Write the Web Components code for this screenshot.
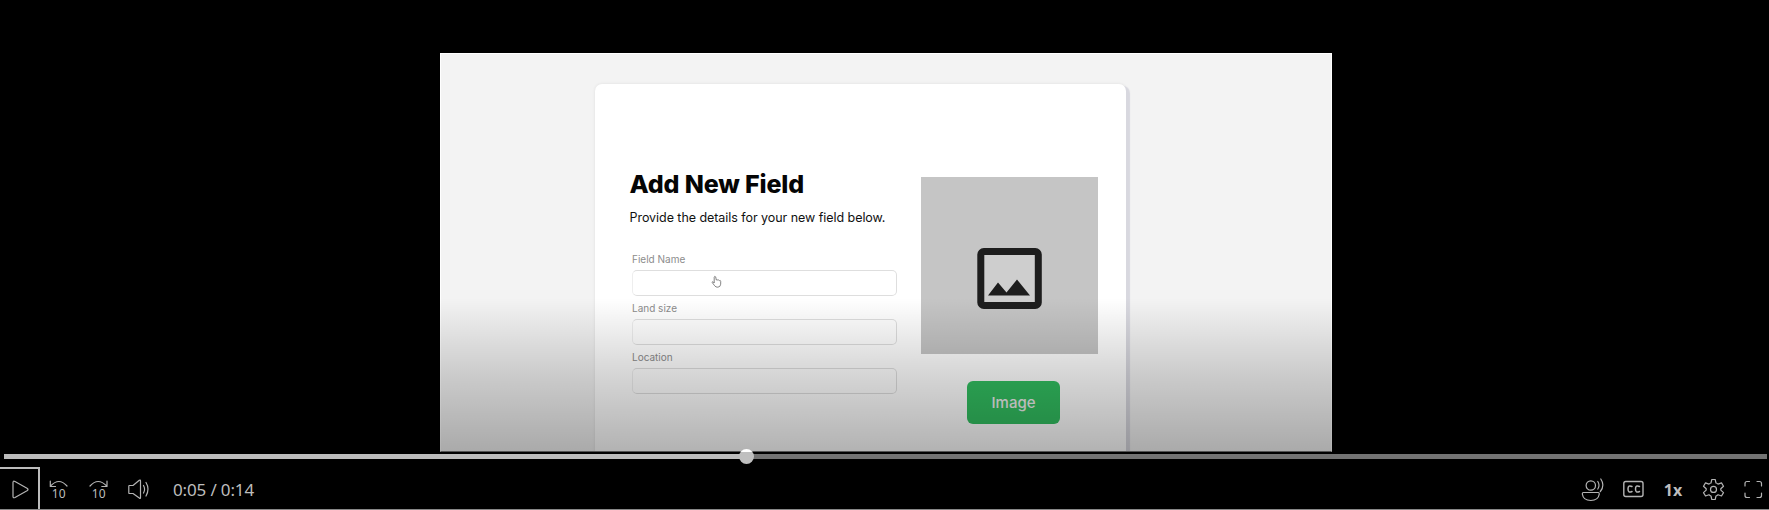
<!DOCTYPE html>
<html lang="en"><head><meta charset="utf-8"><title>Video player</title>
<style>html,body{margin:0;background:#000;height:510px;overflow:hidden}</style></head><body>
<video-player></video-player>
<script>
const define=(name,html)=>customElements.define(name,class extends HTMLElement{
  constructor(){super();const t=document.createElement('template');t.innerHTML=html;this.attachShadow({mode:'open'}).append(t.content.cloneNode(true));}
});
define('form-field',`<style>
:host{display:block;height:49px;font:10px/14px Inter,sans-serif;color:#8c8c8c}
label{display:block;height:18px}
.box{box-sizing:border-box;width:265px;height:26px;border:1px solid #dedede;border-left-color:#eee;border-radius:5px;background:#fff}
</style><label><slot></slot></label><div class="box"></div>`);
define('image-picker',`<style>
:host{display:flex;flex-direction:column;align-items:center;width:177px}
.pic{width:177px;height:177px;background:#c5c5c5;display:block}
.pic svg{display:block}
.btn{width:93px;height:43px;margin:27px 0 0 8px;border-radius:6px;background:#32be60;color:#eee;font:500 15px/43px Inter,sans-serif;text-align:center}
</style><div class="pic"><svg width="177" height="177"><rect x="59.800" y="74.500" width="57.500" height="54" rx="3" fill="#cecece" stroke="#1d1d1d" stroke-width="7"/><path d="M67 118.5 77 105.500 85.500 115.500 96 102.500 109 118.500Z" fill="#1d1d1d"/></svg></div><div class="btn">Image</div>`);
define('field-card',`<style>
:host{display:flex;box-sizing:border-box;width:531px;height:369px;padding:93px 28px 0 34px;background:#fff;border-radius:7px 7px 0 0;box-shadow:4px 2px 1px #d8d8df,0 0 3px #ddd;font-family:Inter,sans-serif}
.form{width:292px;flex:none}
h1{margin:-9px 0 0 0;padding-left:.5px;font:800 25px/32px Inter,sans-serif;color:#050505;letter-spacing:-.15px;white-space:nowrap}
p{margin:9px 0 25px;padding-left:.5px;font:12.500px/18px Inter,sans-serif;letter-spacing:-.05px;color:#111;white-space:nowrap}
form-field{margin-left:3px}
</style><div class="form"><h1>Add New Field</h1><p>Provide the details for your new field below.</p>
<form-field>Field Name</form-field><form-field>Land size</form-field><form-field>Location</form-field></div><image-picker></image-picker>`);
define('video-frame',`<style>
:host{display:block;position:relative;box-sizing:border-box;width:892px;height:399px;margin:53px 0 0 440px;padding:31px 0 0 155px;background:#f3f3f3;overflow:hidden}
.edge{position:absolute;inset:0;border:1px solid #fff;border-bottom-color:#777}
.shade{position:absolute;left:0;right:0;bottom:0;height:154px;background:linear-gradient(rgba(0,0,0,0),rgba(0,0,0,.165) 50%,rgba(0,0,0,.3))}
.hand{position:absolute;left:271px;top:222px}
</style><field-card></field-card><div class="edge"></div>
<svg class="hand" width="12" height="14" viewBox="0 0 12 14" fill="#fff" stroke="#777" stroke-width=".9" stroke-linejoin="round"><path d="M3.200 8V2.200Q3.400.7 4.700 1.900L5.300 5Q6 4.200 6.900 5.200 7.700 4.500 8.400 5.600 9.500 5 9.700 6.300V9.200Q9.400 12 6.900 12.200 4.700 12.300 3.700 10.800L1.200 7.500Q1.200 6.300 2.200 6.900Z"/></svg>
<div class="shade"></div>`);
define('seek-bar',`<style>
:host{display:flex;position:relative;margin:2px 2px 0 4px;height:5px;background:#737373}
.done{width:742px;background:#bcbcbc}
.thumb{position:absolute;left:734.500px;top:-5px;width:15px;height:15px;border-radius:50%;background:linear-gradient(#fff 2.500px,#bfbfbf 3px)}
</style><div class="done"></div><div class="thumb"></div>`);
define('control-bar',`<style>
:host{display:flex;box-sizing:border-box;margin-top:7px;height:44px;border-bottom:1px solid #888;color:#bdbdbd;font-family:"Noto Sans",sans-serif}
svg{display:block;flex:none;fill:none;stroke:#b4b4b4;stroke-width:1.2;stroke-linecap:round;stroke-linejoin:round}
.play{box-sizing:border-box;width:40px;height:42px;margin-top:1px;border-top:2px solid #bdbdbd;border-right:2px solid #bdbdbd}
.play svg{margin-top:-1px}
.i{width:40px;height:43px}
.time{font:17px/48px "Noto Sans",sans-serif;margin-left:13px;white-space:nowrap;letter-spacing:-.15px}
.gap{flex:1}
.rate{width:40px;text-align:center;font:700 16px/49px "Noto Sans",sans-serif}
text{font-family:"Noto Sans",sans-serif;font-size:12px;fill:#bdbdbd;stroke:none}
</style>
<div class="play"><svg width="38" height="41"><path d="M13 14.500Q13 12.500 15 13.500L27 20.200Q29 21.500 27 22.800L15 29.500Q13 30.300 13 28.500Z"/></svg></div>
<svg class="i"><path d="M10.300 15V20.500H15.500M10.500 20Q19 11 27 20"/><text x="11.800" y="32">10</text></svg>
<svg class="i"><path d="M27 15V20.500H21.800M26.700 20Q18 11 10 20"/><text x="11.800" y="32">10</text></svg>
<svg class="i"><path transform="translate(0 1)" d="M9 18.500H13L19.300 13.300Q20.500 12.500 20.500 14V30.500Q20.500 32 19.300 31L13 26.500H9Q8.800 26.500 8.800 25.500V19.500Q8.800 18.500 9 18.500M23.500 18.500Q25.700 22.300 23.500 26M26 15.500Q30 22 26 29"/></svg>
<div class="time">0:05 / 0:14</div><div class="gap"></div>
<svg class="i"><g transform="translate(-.7 1)"><circle cx="18.500" cy="18.500" r="4.700"/><path d="M11 25.500H26Q27 25.500 27 27 26 33.500 18.500 33.500 11 33.500 10 27 10 25.500 11 25.500M25.500 14.500Q28 18.500 25.500 22M28.500 12Q33 18.500 28 24.500"/></g></svg>
<svg class="i"><rect x="10.800" y="15.500" width="19.200" height="15" rx="2" stroke-width="1.400"/><path stroke-width="1.500" d="M19 20.500Q15 18.500 15 23 15 27.500 19 25.500M26.500 20.500Q22.500 18.500 22.500 23 22.500 27.500 26.500 25.500"/></svg>
<div class="rate">1x</div>
<svg class="i"><g transform="translate(-.5 1)"><path d="M19.300 12.500H22.700L23.500 16Q24.600 16.300 25.500 17.100L29 15.900 31 19.200 28.300 21.700V23.100L31 25.600 29 29 25.500 27.800Q24.600 28.600 23.500 29L22.700 32.500H19.300L18.500 29Q17.400 28.600 16.500 27.800L13 29 11 25.600 13.700 23.100V21.700L11 19.200 13 15.900 16.500 17.100Q17.400 16.300 18.500 16Z"/><circle cx="21" cy="22.400" r="3"/></g></svg>
<svg style="width:36px;height:43px"><path transform="translate(0 1)" d="M12 19V16.500Q12 14.500 14 14.500H16.500M24 14.500H26.500Q28.500 14.500 28.500 16.500V19M28.500 26V28.500Q28.500 30.500 26.500 30.500H24M16.500 30.500H14Q12 30.500 12 28.500V26"/></svg>`);
define('video-player',`<style>:host{display:flow-root;width:1769px;height:510px;background:#000}</style><video-frame></video-frame><seek-bar></seek-bar><control-bar></control-bar>`);
</script></body></html>
